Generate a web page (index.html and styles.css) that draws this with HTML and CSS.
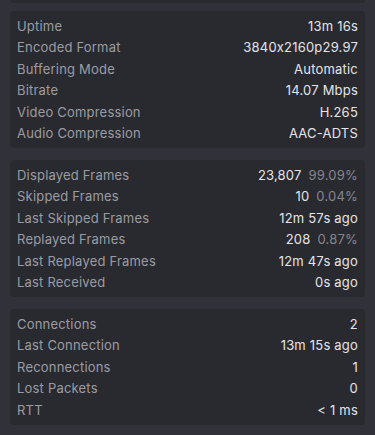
FILE: index.html
```html
<!DOCTYPE html>
<html>
<head>
<meta charset="utf-8">
<link rel="stylesheet" href="styles.css">
</head>
<body>
<div class="panel">
  <div class="card card-tail"></div>
  <div class="card">
    <div class="row"><span class="label">Uptime</span><span class="value">13m 16s</span></div>
    <div class="row"><span class="label">Encoded Format</span><span class="value">3840x2160p29.97</span></div>
    <div class="row"><span class="label">Buffering Mode</span><span class="value">Automatic</span></div>
    <div class="row"><span class="label">Bitrate</span><span class="value">14.07 Mbps</span></div>
    <div class="row"><span class="label">Video Compression</span><span class="value">H.265</span></div>
    <div class="row"><span class="label">Audio Compression</span><span class="value">AAC-ADTS</span></div>
  </div>
  <div class="card">
    <div class="row"><span class="label">Displayed Frames</span><span class="value">23,807<span class="pct">99.09%</span></span></div>
    <div class="row"><span class="label">Skipped Frames</span><span class="value">10<span class="pct">0.04%</span></span></div>
    <div class="row"><span class="label">Last Skipped Frames</span><span class="value">12m 57s ago</span></div>
    <div class="row"><span class="label">Replayed Frames</span><span class="value">208<span class="pct">0.87%</span></span></div>
    <div class="row"><span class="label">Last Replayed Frames</span><span class="value">12m 47s ago</span></div>
    <div class="row"><span class="label">Last Received</span><span class="value">0s ago</span></div>
  </div>
  <div class="card">
    <div class="row"><span class="label">Connections</span><span class="value">2</span></div>
    <div class="row"><span class="label">Last Connection</span><span class="value">13m 15s ago</span></div>
    <div class="row"><span class="label">Reconnections</span><span class="value">1</span></div>
    <div class="row"><span class="label">Lost Packets</span><span class="value">0</span></div>
    <div class="row"><span class="label">RTT</span><span class="value">&lt; 1 ms</span></div>
  </div>
</div>
</body>
</html>
```
FILE: styles.css
```css
html, body {
  margin: 0;
  padding: 0;
  background: #303139;
  height: 100%;
}
body {
  font-family: Inter, "Open Sans", sans-serif;
  font-size: 13px;
  letter-spacing: 0.2px;
  font-feature-settings: "calt" 0;
}
.panel {
  display: flex;
  flex-direction: column;
  gap: 12px;
  padding: 0 10px 11px 10px;
}
.card {
  background: #292a30;
  border-radius: 4px;
  padding: 4px 7px 4px 7px;
  display: flex;
  flex-direction: column;
}
.card-tail {
  height: 3px;
  padding: 0;
  margin-bottom: -4px;
  border-radius: 0 0 4px 4px;
}
.row {
  display: flex;
  justify-content: space-between;
  align-items: center;
  height: 21.5px;
}
.label {
  color: #9b9ca3;
}
.value {
  color: #e4e4e8;
}
.pct {
  color: #85868d;
  margin-left: 7px;
}
```
